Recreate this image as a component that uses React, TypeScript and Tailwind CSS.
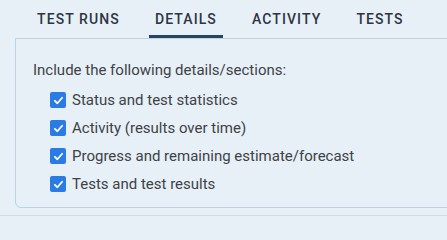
import React from "react";

const tabs = ["Test Runs", "Details", "Activity", "Tests"];
const options = [
  "Status and test statistics",
  "Activity (results over time)",
  "Progress and remaining estimate/forecast",
  "Tests and test results",
];

function Check() {
  return (
    <span className="flex h-[16px] w-[16px] shrink-0 items-center justify-center rounded-[2px] bg-[#2a7be4]">
      <svg width="11" height="11" viewBox="0 0 12 12" fill="none">
        <path d="M2 6.3 L4.8 9 L10 3" stroke="#fff" strokeWidth="1.9" strokeLinecap="round" strokeLinejoin="round" />
      </svg>
    </span>
  );
}

export default function App() {
  return (
    <div className="min-h-screen w-full bg-[#e8f0f7] font-['Roboto',sans-serif]">
      <div className="h-[216px] w-[447px] overflow-hidden border-b border-[#d3dce4]">
        <div className="flex h-[38px] items-end gap-[23px] pl-[31px]">
          {tabs.map((t, i) => (
            <div
              key={t}
              className={
                "flex h-[38px] items-center px-[6px] pt-[4px] text-[14px] font-medium uppercase tracking-[1.1px] text-[#2c3642] border-b-[3px] " +
                (i === 1 ? "border-[#27455c]" : "border-transparent")
              }
            >
              {t}
            </div>
          ))}
        </div>
        <div className="ml-[15px] mr-[-10px] h-[170px] rounded-b-[6px] border border-[#bcd2e5] pl-[17px] pt-[22px]">
          <div className="text-[15px] leading-[18px] text-[#3d4247]">Include the following details/sections:</div>
          <div className="mt-[13px] flex flex-col gap-[12px] pl-[17px]">
            {options.map((o) => (
              <label key={o} className="flex h-[16px] items-center gap-[6px] text-[15px] text-[#3d4247]">
                <Check />
                <span>{o}</span>
              </label>
            ))}
          </div>
        </div>
      </div>
    </div>
  );
}
